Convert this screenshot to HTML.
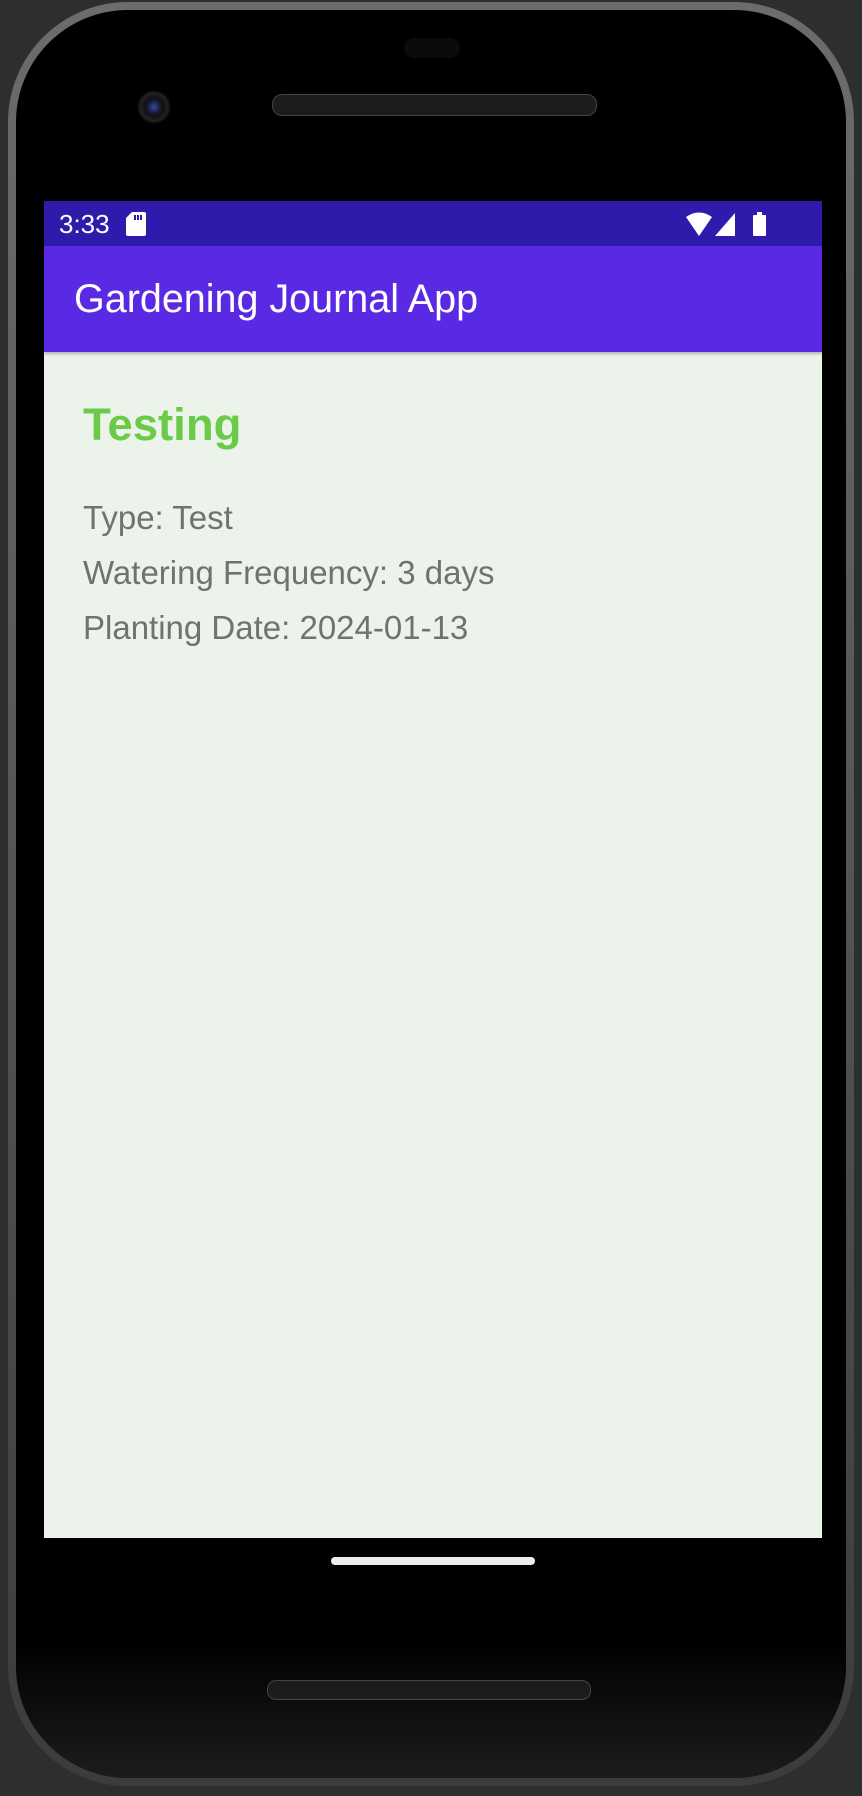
<!DOCTYPE html>
<html><head><meta charset="utf-8"><style>
body{margin:0;width:862px;height:1796px;background:#2c2e30;position:relative;overflow:hidden;font-family:"Liberation Sans",sans-serif}
.frame{position:absolute;left:8px;top:2px;width:846px;height:1784px;border-radius:120px;background:linear-gradient(#6a6c6e,#3a3c3e);}
.body{position:absolute;left:16px;top:10px;width:830px;height:1768px;border-radius:112px;background:#000;}
.bottomgrad{position:absolute;left:16px;top:1640px;width:830px;height:138px;border-radius:0 0 112px 112px;background:linear-gradient(#000,#1c1c1c);}
.cam{position:absolute;left:137px;top:90px;width:34px;height:34px;border-radius:50%;background:radial-gradient(circle at 50% 50%,#3a4fa0 0,#1a2250 5px,#111 9px,#222 14px,#000 17px)}
.speaker{position:absolute;left:272px;top:94px;width:323px;height:20px;border-radius:10px;background:#1c1c1c;border:1px solid #444}
.speaker2{position:absolute;left:267px;top:1680px;width:322px;height:18px;border-radius:9px;background:#1c1c1c;border:1px solid #444}
.pill{position:absolute;left:404px;top:38px;width:56px;height:20px;border-radius:10px;background:#0b0b0d}
.screen{position:absolute;left:44px;top:201px;width:778px;height:1337px;background:#ecf3ea}
.status{position:absolute;left:0;top:0;width:778px;height:45px;background:#2f1bab;color:#fff}
.appbar{position:absolute;left:0;top:45px;width:778px;height:106px;background:#5a29e4;box-shadow:0 2px 3px rgba(0,0,0,.25)}
.appbar span{position:absolute;left:30px;top:31px;font-size:39.5px;color:#fff}
.t{position:absolute;left:39px;color:#6f736f;font-size:33px;white-space:nowrap}
.home{position:absolute;left:331px;top:1557px;width:204px;height:8px;border-radius:4px;background:#eee}
</style></head><body>
<div class="frame"></div>
<div class="body"></div>
<div class="bottomgrad"></div>
<div class="pill"></div>
<div class="cam"></div>
<div class="speaker"></div>
<div class="speaker2"></div>
<div class="screen">
 <div class="status">
  <span style="position:absolute;left:15px;top:8px;font-size:26px">3:33</span>
  <svg style="position:absolute;left:82px;top:11px" width="20" height="24" viewBox="0 0 20 24"><path d="M6 0H18a2 2 0 0 1 2 2V22a2 2 0 0 1-2 2H2a2 2 0 0 1-2-2V6z" fill="#fff"/><rect x="8" y="3" width="2" height="5" fill="#2f1bab"/><rect x="11" y="3" width="2" height="5" fill="#2f1bab"/><rect x="14" y="3" width="2" height="5" fill="#2f1bab"/></svg>
  <svg style="position:absolute;left:642px;top:11px" width="80" height="24" viewBox="0 0 80 24"><path d="M0 5Q13-4 26 5L13 24Z" fill="#fff"/><path d="M49 1V24H29Z" fill="#fff"/><rect x="67" y="3" width="13" height="21" rx="1" fill="#fff"/><rect x="71" y="0" width="5" height="4" fill="#fff"/></svg>
 </div>
 <div class="appbar"><span>Gardening Journal App</span></div>
 <div class="t" style="top:198px;font-size:45.5px;font-weight:bold;color:#6bcb48">Testing</div>
 <div class="t" style="top:298px">Type: Test</div>
 <div class="t" style="top:353px">Watering Frequency: 3 days</div>
 <div class="t" style="top:408px">Planting Date: 2024-01-13</div>
</div>
<div class="home"></div>
</body></html>
